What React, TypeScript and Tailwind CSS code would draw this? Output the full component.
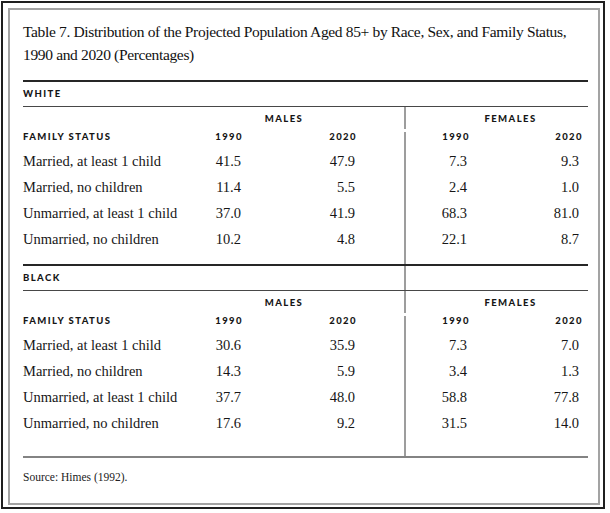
const serif = "font-['Liberation_Serif',serif]";
const sans = "font-['Lato',sans-serif] font-black uppercase text-[9.5px] tracking-[0.15em] leading-[10px]";

type Line = [string, string, string, string, string];

const WHITE_ROWS: Line[] = [
  ['Married, at least 1 child', '41.5', '47.9', '7.3', '9.3'],
  ['Married, no children', '11.4', '5.5', '2.4', '1.0'],
  ['Unmarried, at least 1 child', '37.0', '41.9', '68.3', '81.0'],
  ['Unmarried, no children', '10.2', '4.8', '22.1', '8.7'],
];

const BLACK_ROWS: Line[] = [
  ['Married, at least 1 child', '30.6', '35.9', '7.3', '7.0'],
  ['Married, no children', '14.3', '5.9', '3.4', '1.3'],
  ['Unmarried, at least 1 child', '37.7', '48.0', '58.8', '77.8'],
  ['Unmarried, no children', '17.6', '9.2', '31.5', '14.0'],
];

// one table row: label | males 1990 | males 2020 || females 1990 | females 2020
function Row({
  className = '',
  cells = ['', '', '', '', ''],
}: {
  className?: string;
  cells?: React.ReactNode[];
}) {
  return (
    <div className={`flex ${className}`}>
      <div className="w-[190px] whitespace-nowrap">{cells[0]}</div>
      <div className="w-[28px] text-right whitespace-nowrap">{cells[1]}</div>
      <div className="w-[114px] text-right">{cells[2]}</div>
      <div className="w-[49px]" />
      <div className="flex flex-1 border-l-2 border-[#9d9d9d]">
        <div className="w-[33px]" />
        <div className="w-[28px] text-right whitespace-nowrap">{cells[3]}</div>
        <div className="w-[112px] text-right">{cells[4]}</div>
      </div>
    </div>
  );
}

function Section({ name, rows, spacer, nameDivider }: { name: string; rows: Line[]; spacer: number; nameDivider?: boolean }) {
  const year = (y: string, extra = '') => <span className={`inline-block -mr-[2px] ${extra}`}>{y}</span>;
  return (
    <div>
      <div className="border-t-2 border-[#262626]" />
      <div className="flex h-[24px]">
        <div className={`w-[381px] ${sans} pt-[7px]`}>{name}</div>
        {nameDivider && <div className="border-l-2 border-[#9d9d9d]" />}
      </div>
      <div className="border-t border-[#474747]" />

      {/* group headings */}
      <div className="flex h-[22px]">
        <div className="w-[190px]" />
        <div className={`w-[142px] text-center ${sans} pt-[7px]`}>Males</div>
        <div className="w-[49px]" />
        <div className="flex flex-1 border-l-2 border-[#9d9d9d]">
          <div className="w-[33px]" />
          <div className={`w-[140px] text-center ${sans} pt-[7px] pl-[3px]`}>Females</div>
        </div>
      </div>

      <Row
        className={`h-[19px] pt-[3px] ${sans}`}
        cells={['Family Status', year('1990'), year('2020'), year('1990', '-mr-[3px]'), year('2020', '-mr-[4px]')]}
      />

      {rows.map((r, i) => (
        <Row key={i} className={`h-[26px] leading-[26px] ${serif} text-[14.5px] text-[#161616]`} cells={r} />
      ))}

      <div className="flex" style={{ height: spacer }}>
        <div className="w-[381px]" />
        <div className="border-l-2 border-[#9d9d9d]" />
      </div>
    </div>
  );
}

export default function App() {
  return (
    <div className="min-h-screen bg-white p-[1px] text-[#161616]">
      <div className="w-[604px] h-[508px] border-2 border-[#1f1f1f] pt-[5px] pl-[5px] pr-[3px] pb-[2px]">
        <div className="h-full border-2 border-[#a3a3a3] pl-[13px] pr-[10px] pt-[10px]">
          <h1 className={`${serif} text-[15.5px] tracking-[-0.35px] leading-[23px] font-normal text-[#111] whitespace-nowrap`}>
            Table 7. Distribution of the Projected Population Aged 85+ by Race, Sex, and Family Status,
            <br />
            1990 and 2020 (Percentages)
          </h1>

          <div className="mt-[14px]">
            <Section name="White" rows={WHITE_ROWS} spacer={12} />
            <Section name="Black" rows={BLACK_ROWS} spacer={20} nameDivider />
            <div className="border-t-2 border-[#838383]" />
          </div>

          <p className={`${serif} mt-[12px] text-[11.5px] leading-[14px] text-[#222]`}>Source: Himes (1992).</p>
        </div>
      </div>
    </div>
  );
}
